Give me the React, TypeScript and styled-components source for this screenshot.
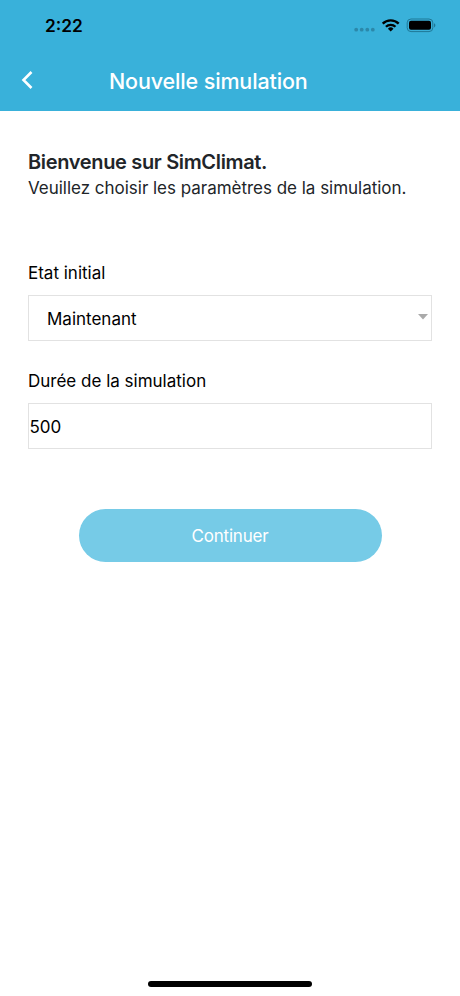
import React from "react";
import styled, { createGlobalStyle } from "styled-components";

const Global = createGlobalStyle`
  * { box-sizing: border-box; }
  body { margin: 0; background: #fff; font-family: Inter, sans-serif; color: #000; }
`;
const Screen = styled.div`
  width: 460px; height: 996px; display: flex; flex-direction: column; overflow: hidden; background: #fff;
`;
const Header = styled.header`
  height: 111px; background: #39b1da; display: flex; flex-direction: column;
`;
const StatusBar = styled.div`
  height: 51px; padding: 0 24px 0 45px; display: flex; align-items: center; justify-content: space-between;
`;
const Time = styled.span`
  font-size: 17.3px; font-weight: 600; line-height: 20px;
`;
const StatusIcons = styled.svg`
  display: block;
`;
const NavBar = styled.div`
  height: 60px; display: flex; align-items: center; padding-left: 20px;
`;
const BackIcon = styled.svg`
  display: block; width: 14px; height: 22px; margin: 0 75px 2px 0;
`;
const Title = styled.h1`
  margin: 0; font-size: 21.5px; font-weight: 500; letter-spacing: -0.14px; color: #fff; white-space: nowrap;
`;
const Content = styled.main`
  flex: 1; padding: 39px 28px 0; display: flex; flex-direction: column;
`;
const Welcome = styled.h2`
  margin: 0; font-size: 20px; line-height: 25px; font-weight: 600; letter-spacing: -0.34px; color: #212529;
`;
const Intro = styled.p`
  margin: 1px 0 59px; font-size: 17px; line-height: 25px; letter-spacing: -0.02px; color: #212529; white-space: nowrap;
`;
const Label = styled.label`
  font-size: 17px; line-height: 26px; margin-bottom: 9px; white-space: nowrap;
`;
const Field = styled.div<{ $inset: number }>`
  height: 46px; border: 1px solid #e2e2e2; padding: 2px 3px 0 ${p => p.$inset}px; margin-bottom: 27px;
  display: flex; align-items: center; justify-content: space-between; font-size: 17px;
`;
const Caret = styled.svg`
  display: block; margin-bottom: 5px;
`;
const Button = styled.button`
  align-self: center; width: 303px; height: 53px; margin-top: 33px; padding: 1px 0 0; border: 0; border-radius: 27px;
  background: #76cbe7; color: #fff; font: 400 17px Inter, sans-serif; letter-spacing: -0.2px;
`;
const HomeIndicator = styled.div`
  width: 164px; height: 6px; border-radius: 3px; background: #000; margin: 0 auto 9px;
`;

export default function App() {
  return (
    <Screen>
      <Global />
      <Header>
        <StatusBar>
          <Time>2:22</Time>
          <StatusIcons width="82" height="17" viewBox="0 0 82 17">
            <g fill="#2b88aa">
              <circle cx="2.200" cy="12.700" r="1.900" />
              <circle cx="7.700" cy="12.700" r="1.900" />
              <circle cx="13.300" cy="12.700" r="1.900" />
              <circle cx="18.800" cy="12.700" r="1.900" />
            </g>
            <g fill="none" stroke="#000" strokeWidth="2.300">
              <path d="M28.700 6.600a11.300 11.300 0 0 1 16 0" />
              <path d="M31.900 9.800a6.800 6.800 0 0 1 9.600 0" />
            </g>
            <path d="M33.900 11.700a4 4 0 0 1 5.600 0l-2.800 2.900z" />
            <rect x="53.200" y="2" width="25.600" height="12.600" rx="3.800" fill="none" stroke="#1f7897" />
            <rect x="55" y="3.800" width="22" height="9" rx="2" />
            <path d="M80 6.200c1.900.7 1.900 3.500 0 4.200z" fill="#1f7897" />
          </StatusIcons>
        </StatusBar>
        <NavBar>
          <BackIcon viewBox="0 0 14 22"><path d="M11.500 3 3.500 11l8 8" fill="none" stroke="#fff" strokeWidth="2.600" /></BackIcon>
          <Title>Nouvelle simulation</Title>
        </NavBar>
      </Header>
      <Content>
        <Welcome>Bienvenue sur SimClimat.</Welcome>
        <Intro>Veuillez choisir les paramètres de la simulation.</Intro>
        <Label>Etat initial</Label>
        <Field $inset={18}>Maintenant<Caret width="10" height="6"><path d="M0 0h10L5 5.500z" fill="#aaa" /></Caret></Field>
        <Label>Durée de la simulation</Label>
        <Field $inset={0.5}>500</Field>
        <Button>Continuer</Button>
      </Content>
      <HomeIndicator />
    </Screen>
  );
}
